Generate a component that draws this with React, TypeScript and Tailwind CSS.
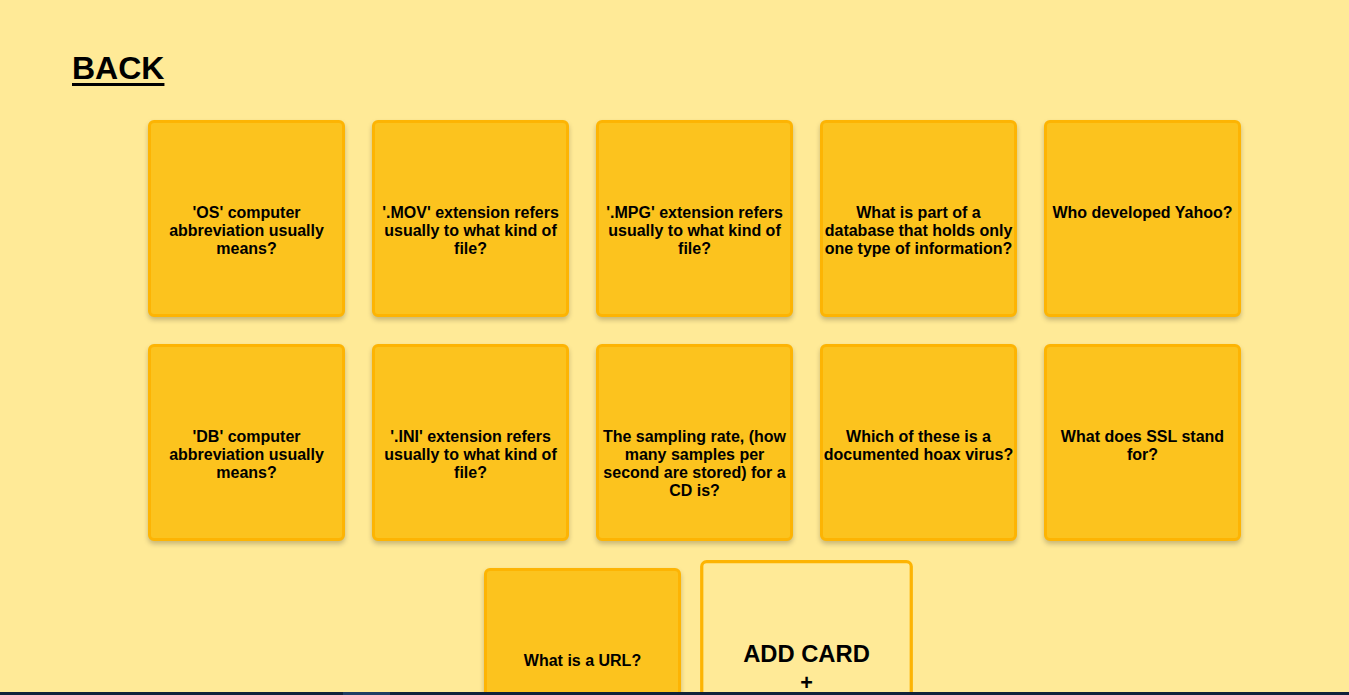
const questions = [
  "'OS' computer abbreviation usually means?",
  "'.MOV' extension refers usually to what kind of file?",
  "'.MPG' extension refers usually to what kind of file?",
  "What is part of a database that holds only one type of information?",
  "Who developed Yahoo?",
  "'DB' computer abbreviation usually means?",
  "'.INI' extension refers usually to what kind of file?",
  "The sampling rate, (how many samples per second are stored) for a CD is?",
  "Which of these is a documented hoax virus?",
  "What does SSL stand for?",
  "What is a URL?",
];

const Card = ({ text }: { text: string }) => {
  return (
    <div className="w-[197px] h-[197px] shrink-0 rounded-md border-[3px] border-[#fdb403] bg-[#fcc31e] shadow-[0_3px_5px_rgba(0,0,0,0.22)] pt-[81px] text-center">
      <p className="font-['Liberation_Sans',Arial,sans-serif] font-bold text-[16px] leading-[18px] text-black">
        {text}
      </p>
    </div>
  );
};

const App = () => {
  return (
    <div className="min-h-[695px] bg-[#ffea97] font-['Liberation_Sans',Arial,sans-serif] pb-10">
      <div className="pl-[72px] pt-[48px]">
        <a href="#" className="text-[32px] leading-[40px] font-bold text-black underline underline-offset-[4px] decoration-[3px]">
          BACK
        </a>
      </div>
      <div className="pl-[40px] mt-[32px]">
        <div className="flex flex-wrap justify-center gap-x-[27px] gap-y-[27px] w-[1093px] mx-auto">
          {questions.map((q, i) => (
            <Card key={i} text={q} />
          ))}
          <div className="w-[197px] h-[197px] shrink-0 scale-[1.08] rounded-md border-[3px] border-[#fdb403] bg-[#ffea97] flex flex-col items-center pt-[71px]">
            <span className="text-[22px] leading-[26px] font-bold text-black">ADD CARD</span>
            <span className="text-[20px] leading-[26px] font-bold text-black">+</span>
          </div>
        </div>
      </div>
      <div className="fixed bottom-0 left-0 right-0 h-[3px] bg-[#11223a]">
        <div className="ml-[343px] w-[47px] h-full bg-[#1f3d63]"></div>
      </div>
    </div>
  );
};

export default App;
